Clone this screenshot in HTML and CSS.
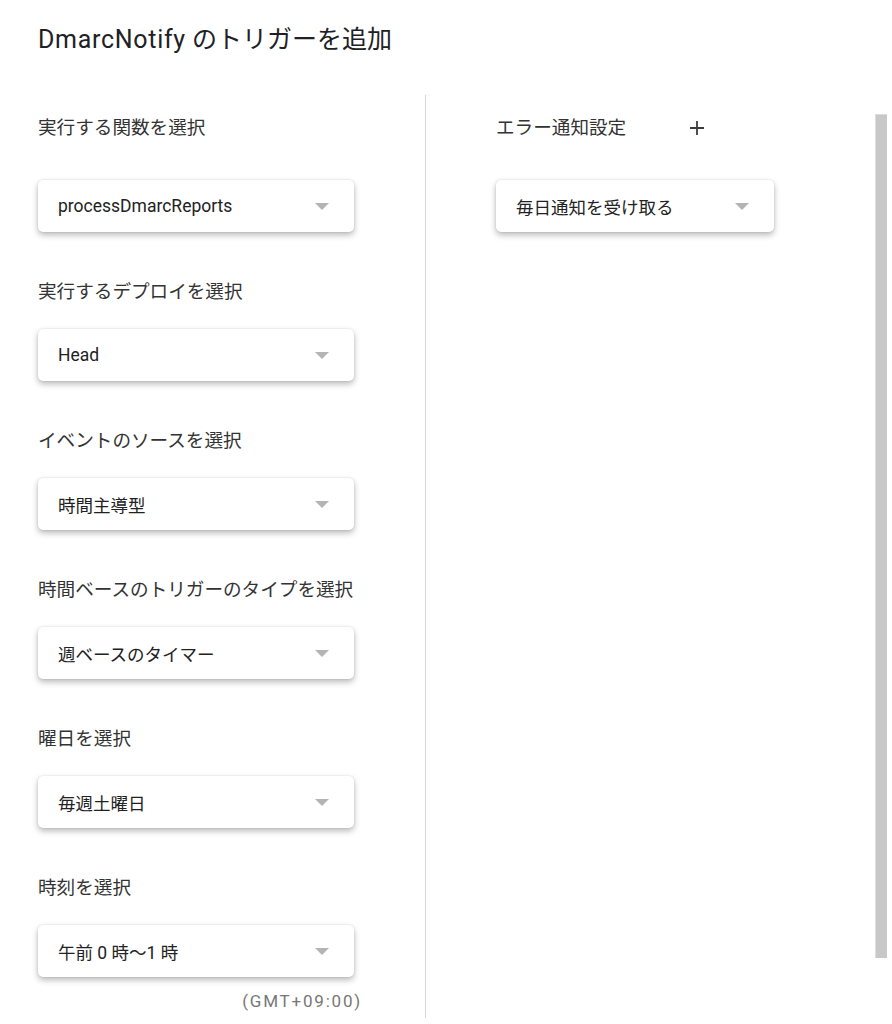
FILE: index.html
```html
<!DOCTYPE html>
<html lang="ja">
<head>
<meta charset="utf-8">
<title>DmarcNotify のトリガーを追加</title>
<link rel="stylesheet" href="styles.css">
</head>
<body>
<div class="dialog">
  <h1 class="title"><span class="title-latin">DmarcNotify</span> のトリガーを追加</h1>
  <div class="columns">
    <div class="col-left">
      <div class="field field-first">
        <div class="label">実行する関数を選択</div>
        <div class="select"><span class="value">processDmarcReports</span><span class="arrow"></span></div>
      </div>
      <div class="field">
        <div class="label">実行するデプロイを選択</div>
        <div class="select"><span class="value">Head</span><span class="arrow"></span></div>
      </div>
      <div class="field">
        <div class="label">イベントのソースを選択</div>
        <div class="select"><span class="value">時間主導型</span><span class="arrow"></span></div>
      </div>
      <div class="field">
        <div class="label">時間ベースのトリガーのタイプを選択</div>
        <div class="select"><span class="value">週ベースのタイマー</span><span class="arrow"></span></div>
      </div>
      <div class="field">
        <div class="label">曜日を選択</div>
        <div class="select"><span class="value">毎週土曜日</span><span class="arrow"></span></div>
      </div>
      <div class="field">
        <div class="label">時刻を選択</div>
        <div class="select"><span class="value">午前 0 時〜1 時</span><span class="arrow"></span></div>
        <div class="tz">(GMT+09:00)</div>
      </div>
    </div>
    <div class="col-right">
      <div class="field field-first">
        <div class="label-row">
          <span class="label">エラー通知設定</span>
          <svg class="plus" width="16" height="16" viewBox="0 0 16 16" aria-hidden="true"><path d="M8 1v14M1 8h14" stroke="#3c3c3c" stroke-width="1.8" fill="none"/></svg>
        </div>
        <div class="select select-narrow"><span class="value">毎日通知を受け取る</span><span class="arrow"></span></div>
      </div>
    </div>
    <div class="scrollbar"></div>
  </div>
</div>
</body>
</html>
```
FILE: styles.css
```css
html, body {
  margin: 0;
  padding: 0;
  background: #ffffff;
}
body {
  font-family: Roboto, "Noto Sans CJK JP", sans-serif;
  color: #222222;
  width: 892px;
  height: 1024px;
  overflow: hidden;
}
.dialog {
  padding-left: 38px;
}
.title {
  margin: 0;
  padding-top: 24px;
  font-size: 25px;
  font-weight: 400;
  line-height: 32px;
  height: 71px;
  color: #202124;
  white-space: nowrap;
}
.title-latin {
  letter-spacing: 0.7px;
}
.columns {
  display: flex;
  align-items: flex-start;
}
.col-left {
  width: 388px;
  border-right: 1px solid #d6d6d6;
  height: 923px;
  padding-top: 21px;
  box-sizing: border-box;
}
.col-right {
  padding-left: 70px;
  padding-top: 21px;
}
.field {
  margin-bottom: 48px;
}
.label {
  font-size: 18.6px;
  line-height: 24px;
  height: 24px;
  color: #333333;
  margin-bottom: 25px;
  white-space: nowrap;
}
.field-first .label {
  margin-bottom: 40px;
}
.label-row {
  display: flex;
  align-items: center;
  height: 24px;
  margin-bottom: 40px;
}
.label-row .label {
  margin-bottom: 0;
}
.plus {
  margin-left: 63px;
}
.select {
  width: 316px;
  height: 52px;
  box-sizing: border-box;
  padding: 0 25px 0 20px;
  display: flex;
  align-items: center;
  justify-content: space-between;
  background: #ffffff;
  border-radius: 5px;
  box-shadow: 0 3px 6px rgba(0, 0, 0, 0.28), 0 0 2px rgba(0, 0, 0, 0.12);
}
.select-narrow {
  width: 278px;
}
.value {
  font-size: 17.5px;
  color: #222222;
  white-space: nowrap;
}
.arrow {
  width: 0;
  height: 0;
  border-left: 7.5px solid transparent;
  border-right: 7.5px solid transparent;
  border-top: 7.5px solid #b4b4b4;
}
.tz {
  width: 324px;
  text-align: right;
  margin-top: 14px;
  font-size: 17px;
  line-height: 20px;
  color: #777777;
  letter-spacing: 1.8px;
}
.scrollbar {
  margin-left: auto;
  margin-right: 5px;
  margin-top: 19px;
  width: 12px;
  height: 844px;
  box-sizing: border-box;
  background: #c8c8c8;
  border-left: 1px solid #dddddd;
  border-top: 1px solid #dddddd;
}
```
